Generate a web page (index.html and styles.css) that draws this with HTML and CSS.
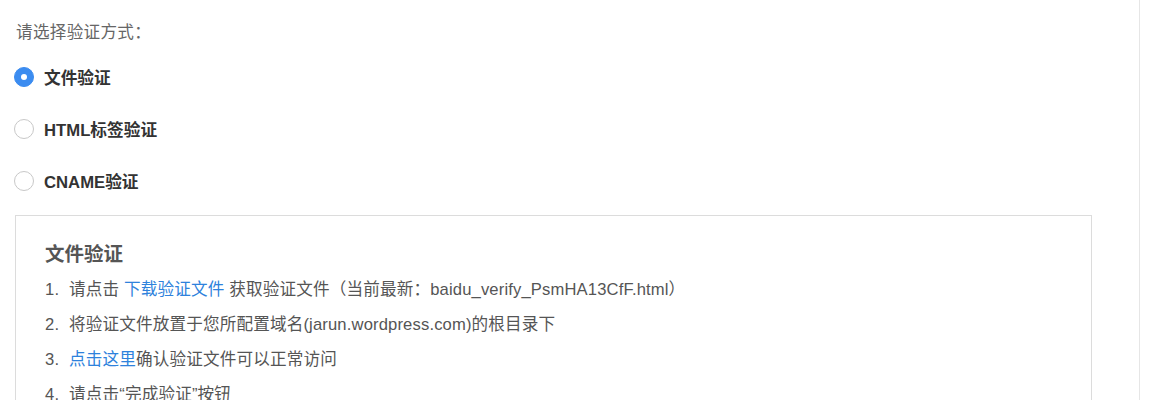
FILE: index.html
```html
<!DOCTYPE html>
<html lang="zh-CN">
<head>
<meta charset="utf-8">
<title>验证方式</title>
<link rel="stylesheet" href="styles.css">
</head>
<body>
<div class="page">
  <div class="main">
    <div class="prompt">请选择验证方式：</div>
    <div class="options">
      <label class="option"><span class="radio checked"></span><span class="opt-label">文件验证</span></label>
      <label class="option"><span class="radio"></span><span class="opt-label">HTML标签验证</span></label>
      <label class="option"><span class="radio"></span><span class="opt-label">CNAME验证</span></label>
    </div>
    <div class="panel">
      <div class="panel-title">文件验证</div>
      <ol class="steps">
        <li><span class="num">1.</span>请点击 <a class="link" href="#">下载验证文件</a> 获取验证文件（当前最新：baidu_verify_PsmHA13CfF.html）</li>
        <li><span class="num">2.</span>将验证文件放置于您所配置域名(jarun.wordpress.com)的根目录下</li>
        <li><span class="num">3.</span><a class="link" href="#">点击这里</a>确认验证文件可以正常访问</li>
        <li><span class="num">4.</span>请点击“完成验证”按钮</li>
      </ol>
    </div>
  </div>
</div>
</body>
</html>
```
FILE: styles.css
```css
* { box-sizing: border-box; }
html, body {
  margin: 0;
  padding: 0;
  background: #fff;
  height: 100%;
  overflow: hidden;
}
body {
  font-family: "Liberation Sans", "Noto Sans CJK SC", sans-serif;
  color: #333;
}
.page {
  height: 100%;
}
.main {
  width: 1140px;
  min-height: 100%;
  border-right: 1px solid #e6e6e6;
  padding: 22px 0 0 15px;
}
.prompt {
  font-size: 16.6px;
  line-height: 22px;
  color: #666;
  padding-left: 1px;
  letter-spacing: 0.3px;
}
.options {
  display: flex;
  flex-direction: column;
  gap: 30px;
  margin-top: 22px;
}
.option {
  display: flex;
  align-items: center;
  gap: 10px;
  height: 22px;
  cursor: pointer;
}
.radio {
  width: 20px;
  height: 20px;
  border-radius: 50%;
  border: 1px solid #c8c8c8;
  background: #fff;
  margin-left: -1px;
  display: flex;
  align-items: center;
  justify-content: center;
}
.radio.checked {
  border-color: #3b8cf0;
  background: #3b8cf0;
}
.radio.checked::after {
  content: "";
  width: 6px;
  height: 6px;
  border-radius: 50%;
  background: #fff;
}
.opt-label {
  font-size: 16.7px;
  font-weight: bold;
  color: #333;
}
.panel {
  margin-top: 23px;
  width: 1077px;
  border: 1px solid #dcdcdc;
  padding: 23px 29px 20px;
}
.panel-title {
  font-size: 19.5px;
  font-weight: bold;
  line-height: 30px;
  color: #555;
}
.steps {
  list-style: none;
  margin: 3px 0 0;
  padding: 0;
}
.steps li {
  font-size: 16.6px;
  line-height: 35px;
  color: #555;
  white-space: nowrap;
  letter-spacing: 0.15px;
}
.num {
  display: inline-block;
  width: 24px;
}
.link {
  color: #2e82dc;
  text-decoration: none;
}
```
